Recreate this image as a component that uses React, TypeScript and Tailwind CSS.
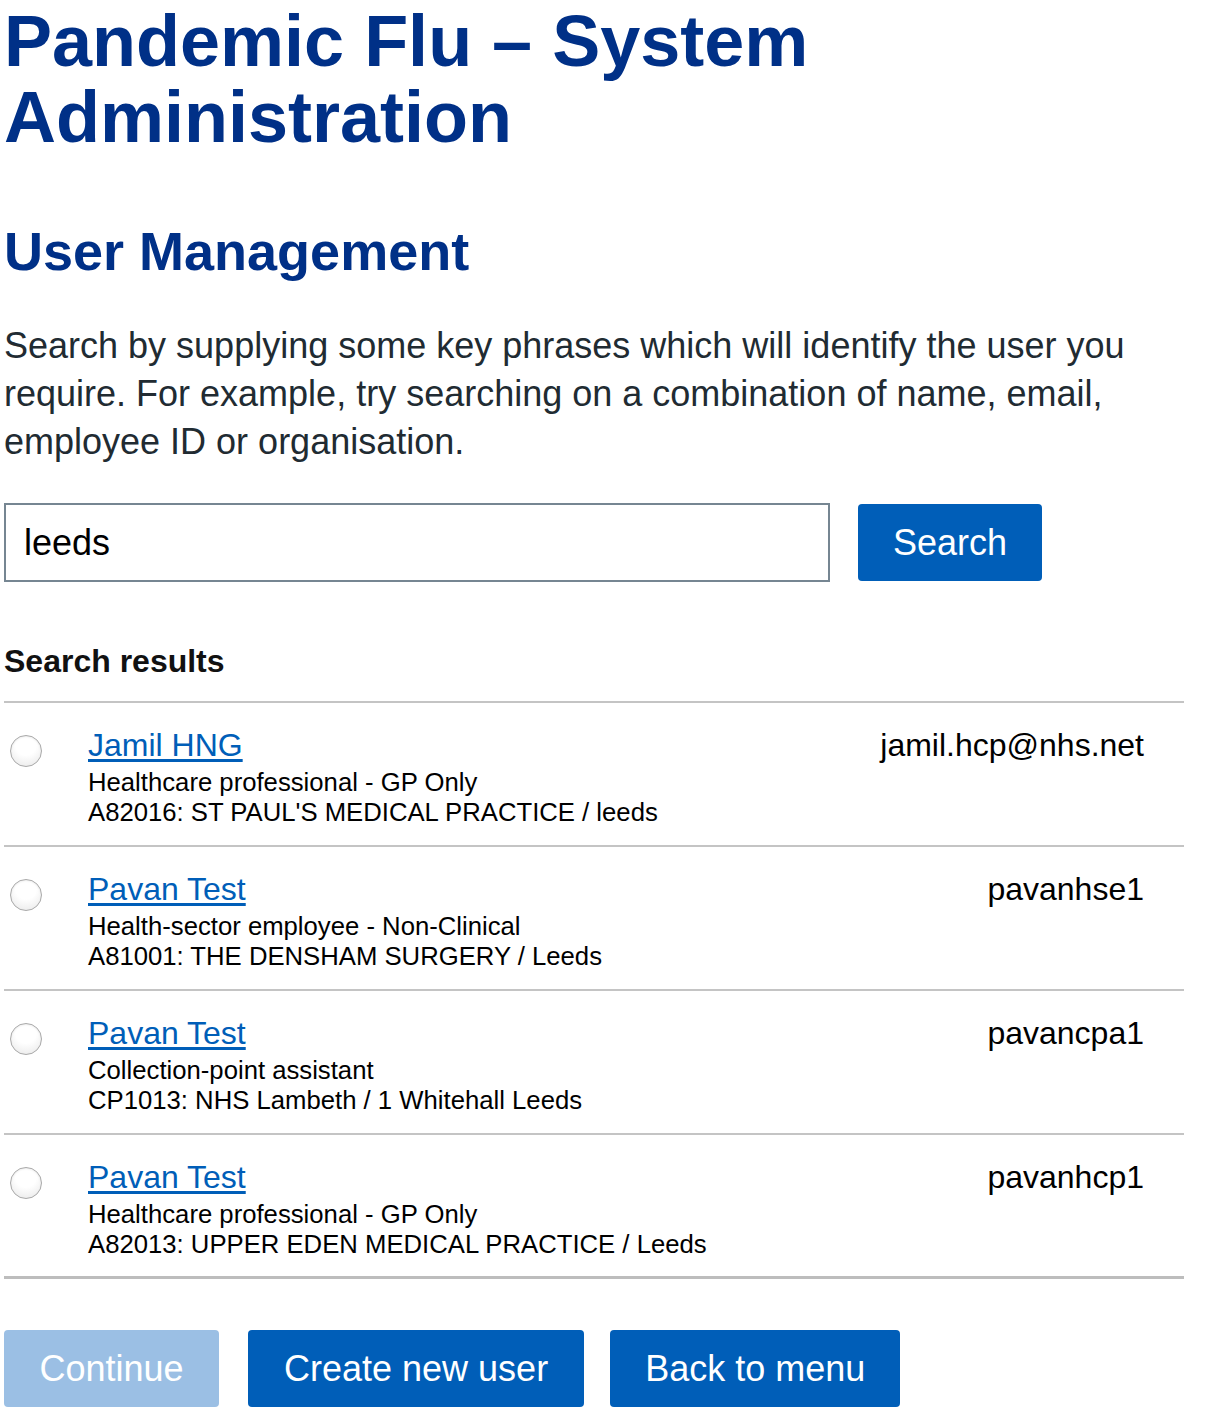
const results = [
  {
    name: "Jamil HNG",
    role: "Healthcare professional - GP Only",
    org: "A82016: ST PAUL'S MEDICAL PRACTICE / leeds",
    id: "jamil.hcp@nhs.net"
  },
  {
    name: "Pavan Test",
    role: "Health-sector employee - Non-Clinical",
    org: "A81001: THE DENSHAM SURGERY / Leeds",
    id: "pavanhse1"
  },
  {
    name: "Pavan Test",
    role: "Collection-point assistant",
    org: "CP1013: NHS Lambeth / 1 Whitehall Leeds",
    id: "pavancpa1"
  },
  {
    name: "Pavan Test",
    role: "Healthcare professional - GP Only",
    org: "A82013: UPPER EDEN MEDICAL PRACTICE / Leeds",
    id: "pavanhcp1"
  }
];

function Radio() {
  return (
    <span className="mt-[8px] block h-[32px] w-[32px] shrink-0 rounded-full border border-[#a9a9a9] bg-[radial-gradient(circle_at_50%_30%,#ffffff_40%,#e6e6e6_100%)] shadow-[inset_0_1px_2px_rgba(0,0,0,0.08)]" />
  );
}

export default function App() {
  return (
    <div className="w-[1184px] pl-[4px] font-['Liberation_Sans',Arial,sans-serif] text-[#212b32]">
      <h1 className="pt-[3px] text-[72px] font-bold leading-[76px] text-[#003087]">
        Pandemic Flu – System Administration
      </h1>

      <h2 className="mt-[64px] text-[54px] font-bold leading-[64px] text-[#003087]">User Management</h2>

      <p className="mt-[39px] text-[36px] leading-[48px]">
        Search by supplying some key phrases which will identify the user you require. For example, try searching on a
        combination of name, email, employee ID or organisation.
      </p>

      <div className="mt-[37px] flex items-center gap-[28px]">
        <input
          defaultValue="leeds"
          className="h-[79px] w-[826px] border-2 border-[#768692] bg-white px-[18px] text-[36px] text-black outline-none"
        />
        <button className="h-[77px] rounded-[4px] bg-[#005eb8] px-[35px] text-[36px] text-white">Search</button>
      </div>

      <h3 className="mt-[59px] text-[32px] font-bold leading-[40px] text-[#111]">Search results</h3>

      <ul className="mt-[20px] border-t-2 border-[#c4c4c4]">
        {results.map((r, i) => (
          <li
            key={i}
            className={
              i === results.length - 1
                ? "flex items-start border-b-[3px] border-[#bdbdbd] pb-[17px] pl-[6px] pr-[40px] pt-[24px]"
                : "flex items-start border-b-2 border-[#c4c4c4] pb-[18px] pl-[6px] pr-[40px] pt-[24px]"
            }
          >
            <Radio />
            <div className="ml-[46px] flex-1">
              <a href="#" className="block w-fit text-[32px] leading-[36px] text-[#005eb8] underline underline-offset-[3px]">
                {r.name}
              </a>
              <div className="mt-[4px] text-[25.7px] leading-[30px] text-black">{r.role}</div>
              <div className="text-[25.7px] leading-[30px] text-black">{r.org}</div>
            </div>
            <div className="text-[32px] leading-[36px] text-black">{r.id}</div>
          </li>
        ))}
      </ul>

      <div className="mt-[51px] flex pb-[12px]">
        <button className="h-[77px] w-[215px] rounded-[4px] bg-[#9bbfe4] text-[36px] text-white">Continue</button>
        <button className="ml-[29px] h-[77px] rounded-[4px] bg-[#005eb8] px-[36px] text-[36px] text-white">
          Create new user
        </button>
        <button className="ml-[26px] h-[77px] rounded-[4px] bg-[#005eb8] px-[35px] text-[36px] text-white">
          Back to menu
        </button>
      </div>
    </div>
  );
}
